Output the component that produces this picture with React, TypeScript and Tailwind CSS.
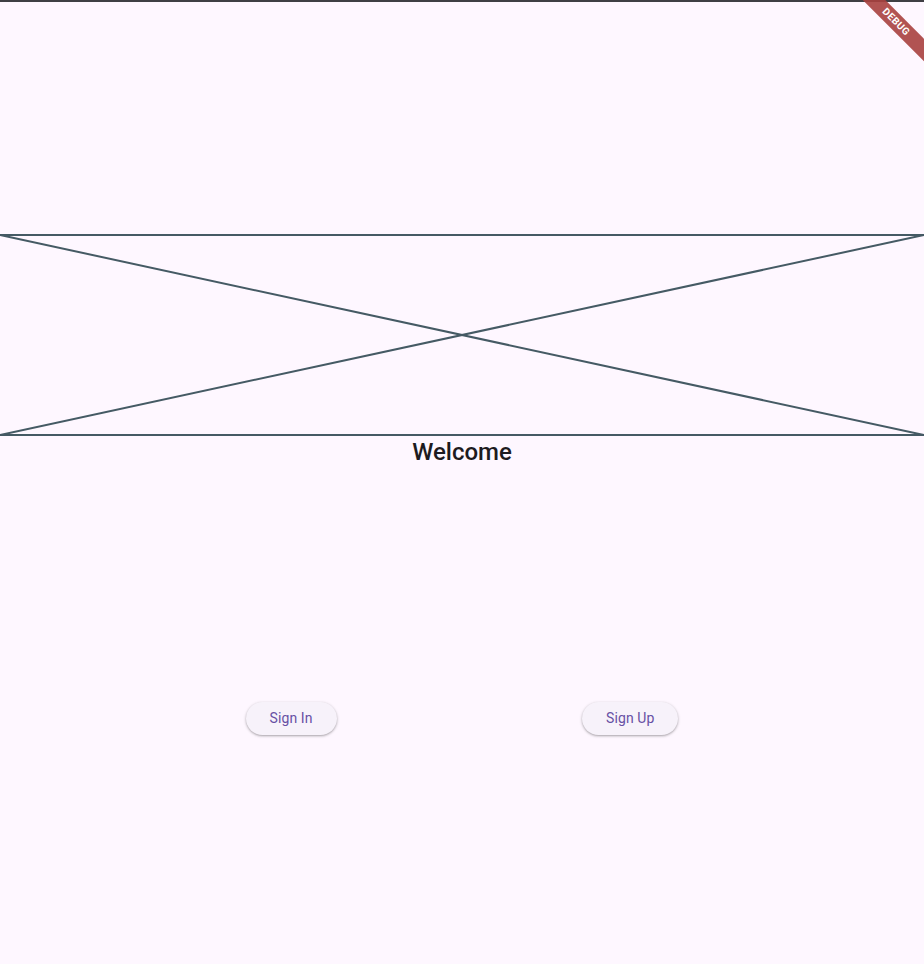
export default function App() {
  return (
    <main
      className="relative h-[964px] w-full overflow-hidden bg-[#fef7ff]"
      style={{ fontFamily: "Roboto, 'Liberation Sans', sans-serif" }}
    >
      {/* top edge */}
      <div className="h-[2px] w-full bg-[#3f3f44]" />

      {/* placeholder */}
      <div className="mt-[232px] h-[202px] w-full">
        <svg width="100%" height="202" viewBox="0 0 924 202" preserveAspectRatio="none">
          <line x1="0" y1="1" x2="924" y2="1" stroke="#455a64" strokeWidth="2" />
          <line x1="0" y1="201" x2="924" y2="201" stroke="#455a64" strokeWidth="2" />
          <line x1="0" y1="1" x2="924" y2="201" stroke="#455a64" strokeWidth="2" />
          <line x1="0" y1="201" x2="924" y2="1" stroke="#455a64" strokeWidth="2" />
        </svg>
      </div>

      <h1 className="text-center text-[24px] leading-[32px] font-medium text-[#1d1b20]">
        Welcome
      </h1>

      {/* buttons */}
      <div className="mt-[234px] flex justify-evenly">
        <button className="h-[33px] rounded-full bg-[#f7f2fa] px-[24px] text-[14px] tracking-[0.1px] text-[#6750a4] shadow-[0_1px_2px_rgba(0,0,0,0.25),0_1px_3px_1px_rgba(0,0,0,0.08)]">
          Sign In
        </button>
        <button className="h-[33px] rounded-full bg-[#f7f2fa] px-[24px] text-[14px] tracking-[0.1px] text-[#6750a4] shadow-[0_1px_2px_rgba(0,0,0,0.25),0_1px_3px_1px_rgba(0,0,0,0.08)]">
          Sign Up
        </button>
      </div>

      {/* debug banner */}
      <div className="pointer-events-none absolute right-[-34px] top-[14px] w-[124px] rotate-45 bg-[#a8403f]/90 text-center text-[10px] leading-[16px] font-bold tracking-[0.5px] text-white">
        DEBUG
      </div>
    </main>
  );
}
